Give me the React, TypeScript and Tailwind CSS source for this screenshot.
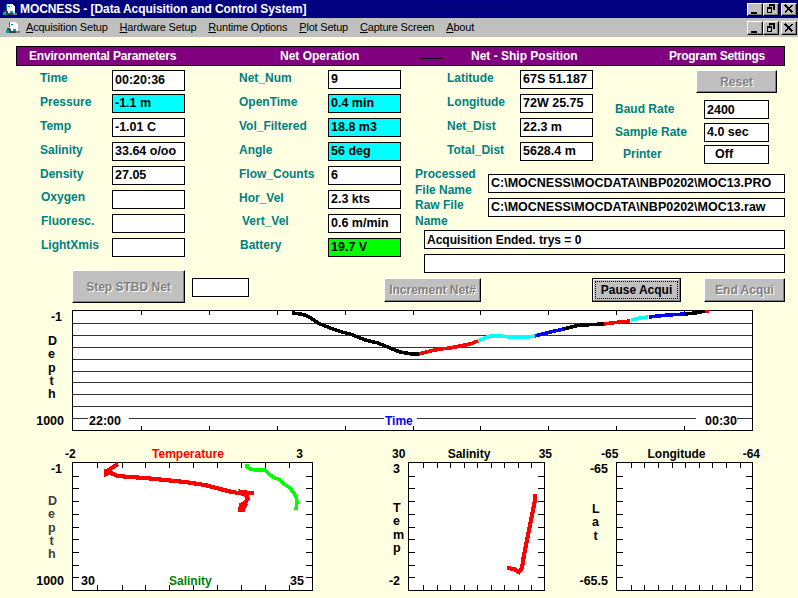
import type { ReactNode } from 'react';

type Tone = 'plain' | 'cyan' | 'green';

const boxTone: Record<Tone, string> = {
  plain: 'bg-white',
  cyan: 'bg-[#00ffff]',
  green: 'bg-[#00ff00]',
};

interface Reading {
  label: string;
  value?: string;
  tone?: Tone;
  labelClass?: string;
  tall?: boolean;
}

const environmental: Reading[] = [
  { label: 'Time', value: '00:20:36', tall: true },
  { label: 'Pressure', value: '-1.1 m', tone: 'cyan' },
  { label: 'Temp', value: '-1.01 C' },
  { label: 'Salinity', value: '33.64 o/oo' },
  { label: 'Density', value: '27.05' },
  { label: 'Oxygen', labelClass: 'pl-[1px] -mt-[1px]' },
  { label: 'Fluoresc.', labelClass: 'pl-[1px] -mt-[1px]' },
  { label: 'LightXmis', labelClass: 'pl-[1px] -mt-[1px]' },
];

const netOperation: Reading[] = [
  { label: 'Net_Num', value: '9' },
  { label: 'OpenTime', value: '0.4 min', tone: 'cyan' },
  { label: 'Vol_Filtered', value: '18.8 m3', tone: 'cyan' },
  { label: 'Angle', value: '56 deg', tone: 'cyan' },
  { label: 'Flow_Counts', value: '6' },
  { label: 'Hor_Vel', value: '2.3 kts' },
  { label: 'Vert_Vel', value: '0.6 m/min', labelClass: 'pl-[3px] -mt-[1px]' },
  { label: 'Battery', value: '19.7 V', tone: 'green', labelClass: 'pl-[1px] -mt-[1px]' },
];

const shipPosition: Reading[] = [
  { label: 'Latitude', value: '67S 51.187' },
  { label: 'Longitude', value: '72W 25.75' },
  { label: 'Net_Dist', value: '22.3 m' },
  { label: 'Total_Dist', value: '5628.4 m' },
];

const ValueBox = ({ children, className = '' }: { children?: ReactNode; className?: string }) => (
  <div className={`flex items-center border border-black pl-[2px] text-[12.5px] font-bold leading-none text-black whitespace-nowrap ${className}`}>
    {children}
  </div>
);

const ReadingColumn = ({ rows, labelWidth }: { rows: Reading[]; labelWidth: string }) => (
  <div className="flex flex-col">
    {rows.map((row) => (
      <div key={row.label} className="flex h-[24px] items-start">
        <div className={`${labelWidth} text-[12px] font-bold leading-[16px] text-[#008080] ${row.labelClass ?? ''}`}>{row.label}</div>
        <ValueBox className={`w-[73px] ${row.tall ? 'h-[21px]' : 'h-[19px]'} ${boxTone[row.tone ?? 'plain']}`}>{row.value}</ValueBox>
      </div>
    ))}
  </div>
);

const BevelButton = ({ children, className = '' }: { children: ReactNode; className?: string }) => (
  <div className={`flex items-center justify-center border border-t-white border-l-white border-r-black border-b-black bg-[#c0c0c0] text-[12px] font-bold text-[#808080] shadow-[inset_-1px_-1px_0_#808080] [text-shadow:1px_1px_0_#fff] ${className}`}>
    {children}
  </div>
);

const AppIcon = ({ className = '' }: { className?: string }) => (
  <svg width="14" height="13" viewBox="0 0 14 13" shapeRendering="crispEdges" className={className}>
    <path d="M1 7h9v5H1z" fill="#404040" />
    <path d="M3 1h6l3 3v6H5z" fill="#ffffff" />
    <path d="M3 1h1v5H3zM5 3h2v1H5z" fill="#008080" />
    <path d="M0 9h3v3H0zM7 8h3v2H7z" fill="#00a0c0" />
    <path d="M10 10h4v2h-4z" fill="#808080" />
  </svg>
);

const WindowButton = ({ kind, height }: { kind: 'min' | 'restore' | 'close'; height: string }) => (
  <div className={`flex w-[16px] items-center justify-center border border-t-white border-l-white border-r-black border-b-black bg-[#c0c0c0] shadow-[inset_-1px_-1px_0_#808080] ${height}`}>
    <svg width="10" height="10" viewBox="0 0 10 10" shapeRendering="crispEdges">
      {kind === 'min' && <path d="M1 8h6v2H1z" fill="#000" />}
      {kind === 'restore' && (
        <path d="M3 0h6v6H7V2H4v1H3zM1 3h5v6H1zM2 5v3h3V5z" fill="#000" fillRule="evenodd" />
      )}
      {kind === 'close' && <path d="M1 1L8.5 8.5M8.5 1L1 8.5" stroke="#000" strokeWidth="1.6" fill="none" />}
    </svg>
  </div>
);

const WindowButtons = ({ height }: { height: string }) => (
  <div className="flex items-center">
    <WindowButton kind="min" height={height} />
    <WindowButton kind="restore" height={height} />
    <div className="ml-[2px]">
      <WindowButton kind="close" height={height} />
    </div>
  </div>
);

const menus = [
  { key: 'A', rest: 'cquisition Setup' },
  { key: 'H', rest: 'ardware Setup' },
  { key: 'R', rest: 'untime Options' },
  { key: 'P', rest: 'lot Setup' },
  { key: 'C', rest: 'apture Screen' },
  { key: 'A', rest: 'bout' },
];

// main depth trace, split where the colour changes
const depthTrace = [
  { color: '#000000', points: '292,313 300,314 305,315 311,318 318,323 325,326 333,329 342,332 350,334 358,337 365,340 378,343 390,348 400,352 406,353 412,354 419,354' },
  { color: '#ff0000', points: '419,354 430,351 440,349 450,348 460,346 470,344 478,341' },
  { color: '#00ffff', points: '478,341 485,338 490,336 500,336 510,337 520,337 528,337 535,336' },
  { color: '#0000ff', points: '535,336 550,332 564,329' },
  { color: '#000000', points: '564,329 575,326 582,325 604,324' },
  { color: '#ff0000', points: '604,324 620,322 630,321' },
  { color: '#00ffff', points: '631,320 640,318 648,317' },
  { color: '#0000ff', points: '649,317 668,315 685,314' },
  { color: '#000000', points: '685,314 695,313 705,311' },
  { color: '#ff0000', points: '705,311 709,311' },
];

const gridY = [323, 335, 347, 359, 371, 382, 394, 406];
const mainTickX = [141, 209, 277, 345, 413, 480, 548, 616, 684];
const plotTickY = [476, 488, 501, 514, 527, 539, 552, 565, 577];

const DepthChart = () => (
  <svg width="681" height="121" viewBox="72 310 681 121" shapeRendering="crispEdges" className="block">
    <rect x="72.5" y="310.5" width="680" height="120" fill="#ffffff" stroke="#000000" />
    {gridY.map((y) => (
      <line key={y} x1="73" x2="752" y1={y + 0.5} y2={y + 0.5} stroke="#333333" />
    ))}
    {[[73, 88], [129, 384], [417, 696], [737, 752]].map(([a, b]) => (
      <line key={a} x1={a} x2={b} y1="418.5" y2="418.5" stroke="#333333" />
    ))}
    {mainTickX.map((x) => (
      <g key={x} stroke="#000000">
        <line x1={x + 0.5} x2={x + 0.5} y1="311" y2="315" />
        <line x1={x + 0.5} x2={x + 0.5} y1="426" y2="430" />
      </g>
    ))}
    {depthTrace.map((seg) => (
      <polyline key={seg.points} points={seg.points} fill="none" stroke={seg.color} strokeWidth="3.6" />
    ))}
    <text x="89" y="425" className="fill-black text-[12.5px] font-bold">22:00</text>
    <text x="385" y="425" className="fill-[#0000ff] text-[12px] font-bold">Time</text>
    <text x="705" y="425" className="fill-black text-[12.5px] font-bold">00:30</text>
  </svg>
);

interface PlotProps {
  x: number;
  width: number;
  tickX: number[];
  children?: ReactNode;
}

const PlotFrame = ({ x, width, tickX, children }: PlotProps) => (
  <svg width={width} height="129" viewBox={`${x} 462 ${width} 129`} shapeRendering="crispEdges" className="block">
    <rect x={x + 0.5} y="462.5" width={width - 1} height="128" fill="#ffffff" stroke="#000000" />
    <g stroke="#000000">
      {tickX.map((t) => (
        <g key={t}>
          <line x1={t + 0.5} x2={t + 0.5} y1="463" y2="468" />
          <line x1={t + 0.5} x2={t + 0.5} y1="585" y2="590" />
        </g>
      ))}
      {plotTickY.map((t) => (
        <g key={t}>
          <line x1={x + 1} x2={x + 7} y1={t + 0.5} y2={t + 0.5} />
          <line x1={x + width - 7} x2={x + width - 1} y1={t + 0.5} y2={t + 0.5} />
        </g>
      ))}
    </g>
    {children}
  </svg>
);

interface AxisProps {
  width: string;
  numberPad: string;
  bottomPad: string;
  letterPad: string;
  letterGap: string;
  letters: string[];
  top: string;
  bottom: string;
  tone?: string;
}

const DepthAxis = ({ width, numberPad, bottomPad, letterPad, letterGap, letters, top, bottom, tone = 'text-black' }: AxisProps) => (
  <div className={`flex h-full shrink-0 flex-col pt-[1px] text-[12.5px] font-bold leading-[13px] ${width}`}>
    <div className={`text-right ${numberPad}`}>{top}</div>
    <div className={`flex flex-col items-end ${letterPad} ${letterGap} ${tone}`}>
      {letters.map((letter, i) => (
        <div key={i} className="h-[13.25px] w-[7px] text-center">{letter}</div>
      ))}
    </div>
    <div className={`mt-auto mb-[3px] text-right ${bottomPad}`}>{bottom}</div>
  </div>
);

const PlotHeader = ({ left, title, right, className, titleClass }: { left: string; title: string; right: string; className: string; titleClass: string }) => (
  <div className={`flex h-[16px] items-center justify-between text-[12px] font-bold leading-none ${className}`}>
    <span>{left}</span>
    <span className={titleClass}>{title}</span>
    <span>{right}</span>
  </div>
);

export default function App() {
  return (
    <div className="h-[598px] w-[798px] overflow-hidden bg-[#ffffe1] font-['Liberation_Sans',Arial,sans-serif] text-black">
      {/* title bar */}
      <div className="relative flex h-[18px] items-center bg-[#000080] pr-[1px] pl-[3px]">
        <AppIcon />
        <div className="ml-[3px] text-[12px] font-bold tracking-[-0.08px] whitespace-nowrap text-white">
          MOCNESS - [Data Acquisition and Control System]
        </div>
        <div className="ml-auto">
          <WindowButtons height="h-[13px]" />
        </div>
        <div className="absolute top-[5px] left-[426px] h-[1px] w-[94px] bg-black" />
      </div>

      {/* menu bar */}
      <div className="flex h-[19px] items-center bg-[#c0c0c0] pr-[1px] pl-[6px]">
        <AppIcon />
        <div className="ml-[6px] flex gap-[12px] text-[11px] tracking-[-0.2px] text-black">
          {menus.map((m) => (
            <span key={m.rest} className="whitespace-nowrap">
              <span className="underline">{m.key}</span>
              {m.rest}
            </span>
          ))}
        </div>
        <div className="ml-auto">
          <WindowButtons height="h-[14px]" />
        </div>
      </div>

      {/* section headings */}
      <div className="relative mt-[9px] ml-[16px] flex h-[20px] w-[769px] items-center border border-black bg-[#800080] text-[12px] font-bold whitespace-nowrap text-white">
        <div className="w-[250px] pl-[12px] tracking-[-0.2px]">Environmental Parameters</div>
        <div className="w-[192px] pl-[13px]">Net Operation</div>
        <div className="w-[210px] pl-[12px]">Net - Ship Position</div>
        <div className="tracking-[-0.25px]">Program Settings</div>
        <div className="absolute top-[11px] left-[403px] h-[1px] w-[23px] bg-black" />
      </div>

      {/* readings */}
      <div className="mt-[4px] flex h-[200px]">
        <div className="ml-[40px]">
          <ReadingColumn rows={environmental} labelWidth="w-[72px]" />
        </div>
        <div className="ml-[54px]">
          <ReadingColumn rows={netOperation} labelWidth="w-[89px]" />
        </div>
        <div className="ml-[14px] w-[370px]">
          <div className="flex h-[97px]">
            <div className="ml-[32px]">
              <ReadingColumn rows={shipPosition} labelWidth="w-[73px]" />
            </div>
            <div className="ml-[22px] flex flex-col">
              <BevelButton className="ml-[81px] h-[25px] w-[81px]">Reset</BevelButton>
              <div className="mt-[7px] flex h-[24px] items-start">
                <div className="mt-[1px] w-[89px] text-[12px] font-bold leading-[16px] text-[#008080]">Baud Rate</div>
                <ValueBox className="h-[19px] w-[65px] bg-white">2400</ValueBox>
              </div>
              <div className="flex h-[24px] items-start">
                <div className="mt-[1px] w-[89px] text-[12px] font-bold leading-[16px] text-[#008080]">Sample Rate</div>
                <ValueBox className="h-[19px] w-[65px] bg-white">4.0 sec</ValueBox>
              </div>
              <div className="flex h-[24px] items-start">
                <div className="mt-[1px] w-[89px] pl-[8px] text-[12px] font-bold leading-[16px] text-[#008080]">Printer</div>
                <ValueBox className="h-[19px] w-[65px] bg-white pl-[10px]">Off</ValueBox>
              </div>
            </div>
          </div>
          <div className="flex h-[63px]">
            <div className="w-[73px] text-[12px] font-bold leading-[15.5px] text-[#008080]">
              <div>Processed File Name</div>
              <div>Raw File Name</div>
            </div>
            <div className="flex flex-col gap-[5px] pt-[7px]">
              <ValueBox className="h-[19px] w-[297px] bg-white">C:\MOCNESS\MOCDATA\NBP0202\MOC13.PRO</ValueBox>
              <ValueBox className="h-[19px] w-[297px] bg-white">C:\MOCNESS\MOCDATA\NBP0202\MOC13.raw</ValueBox>
            </div>
          </div>
          <div className="ml-[9px] flex flex-col gap-[5px]">
            <ValueBox className="h-[19px] w-[361px] bg-white">
              <span className="text-[12px]">Acquisition Ended. trys = 0</span>
            </ValueBox>
            <ValueBox className="h-[19px] w-[361px] bg-white" />
          </div>
        </div>
      </div>

      {/* action buttons */}
      <div className="ml-[72px] flex h-[33px] items-start">
        <BevelButton className="h-[33px] w-[113px]">Step STBD Net</BevelButton>
        <ValueBox className="mt-[8px] ml-[7px] h-[19px] w-[57px] bg-white" />
        <BevelButton className="mt-[8px] ml-[135px] h-[24px] w-[97px]">Increment Net#</BevelButton>
        <div className="mt-[8px] ml-[111px] h-[24px] w-[89px] border border-black bg-[#c0c0c0] p-[2px] shadow-[inset_-1px_-1px_0_#808080,inset_1px_1px_0_#ffffff]">
          <div className="flex h-full items-center justify-center border border-dotted border-black text-[12px] font-bold text-black">Pause Acqui</div>
        </div>
        <BevelButton className="mt-[8px] ml-[23px] h-[24px] w-[81px]">End Acqui</BevelButton>
      </div>

      {/* depth against time */}
      <div className="mt-[7px] flex h-[121px]">
        <DepthAxis
          width="w-[72px]"
          numberPad="pr-[10px]"
          bottomPad="pr-[8px]"
          letterPad="pr-[17px]"
          letterGap="mt-[11px]"
          letters={['D', 'e', 'p', 't', 'h']}
          top="-1"
          bottom="1000"
        />
        <DepthChart />
      </div>

      {/* profile plots */}
      <div className="mt-[15px] flex">
        <div>
          <PlotHeader left="-2" title="Temperature" right="3" className="mr-[10px] ml-[65px]" titleClass="ml-[4px] text-[#ff0000]" />
          <div className="flex h-[129px]">
            <DepthAxis
              width="w-[72px]"
              numberPad="pr-[10px]"
              bottomPad="pr-[8px]"
              letterPad="pr-[17px]"
              letterGap="mt-[19px]"
              letters={['D', 'e', 'p', 't', 'h']}
              top="-1"
              bottom="1000"
              tone="text-[#404040]"
            />
            <PlotFrame x={72} width={241} tickX={[97, 122, 145, 169, 193, 217, 241, 265, 289]}>
              <polyline
                points="118,464 113,467 110,470 106,471 106,474 110,472 113,474 118,476 130,477 145,478 165,480 185,482 205,485 220,489 232,492 245,494 250,493 243,492 248,498 245,503 241,505 240,510 243,510 246,503"
                fill="none"
                stroke="#ff0000"
                strokeWidth="4.2"
              />
              <rect x="250" y="491" width="4" height="4" fill="#ff0000" />
              <polyline
                points="247,464 247,467 250,469 256,470 265,470 268,473 273,477 280,480 284,484 290,488 294,493 296,497 297,501 296,510"
                fill="none"
                stroke="#00ff00"
                strokeWidth="3.6"
              />
              <text x="81" y="585" className="fill-black text-[12.5px] font-bold">30</text>
              <text x="169" y="585" className="fill-[#008000] text-[12px] font-bold">Salinity</text>
              <text x="290" y="585" className="fill-black text-[12.5px] font-bold">35</text>
            </PlotFrame>
          </div>
        </div>
        <div>
          <PlotHeader left="30" title="Salinity" right="35" className="-mr-[7px] ml-[79px]" titleClass="mr-[6px]" />
          <div className="flex h-[129px]">
            <DepthAxis
              width="w-[95px]"
              numberPad="pr-[8px]"
              bottomPad="pr-[8px]"
              letterPad="pr-[8px]"
              letterGap="mt-[26px]"
              letters={['T', 'e', 'm', 'p']}
              top="3"
              bottom="-2"
            />
            <PlotFrame x={408} width={137} tickX={[423, 437, 450, 464, 477, 491, 504, 518, 531]}>
              <polyline
                points="535,494 535,500 533,510 530,525 527,540 524,555 522,568 519,572 514,569 507,568"
                fill="none"
                stroke="#ff0000"
                strokeWidth="4.2"
              />
            </PlotFrame>
          </div>
        </div>
        <div>
          <PlotHeader left="-65" title="Longitude" right="-64" className="-mr-[7px] ml-[56px]" titleClass="mr-[8px]" />
          <div className="flex h-[129px]">
            <DepthAxis
              width="w-[71px]"
              numberPad="pr-[8px]"
              bottomPad="pr-[8px]"
              letterPad="pr-[17px]"
              letterGap="mt-[27px]"
              letters={['L', 'a', 't']}
              top="-65"
              bottom="-65.5"
            />
            <PlotFrame x={616} width={137} tickX={[631, 644, 658, 672, 685, 699, 712, 726, 740]} />
          </div>
        </div>
      </div>
    </div>
  );
}
